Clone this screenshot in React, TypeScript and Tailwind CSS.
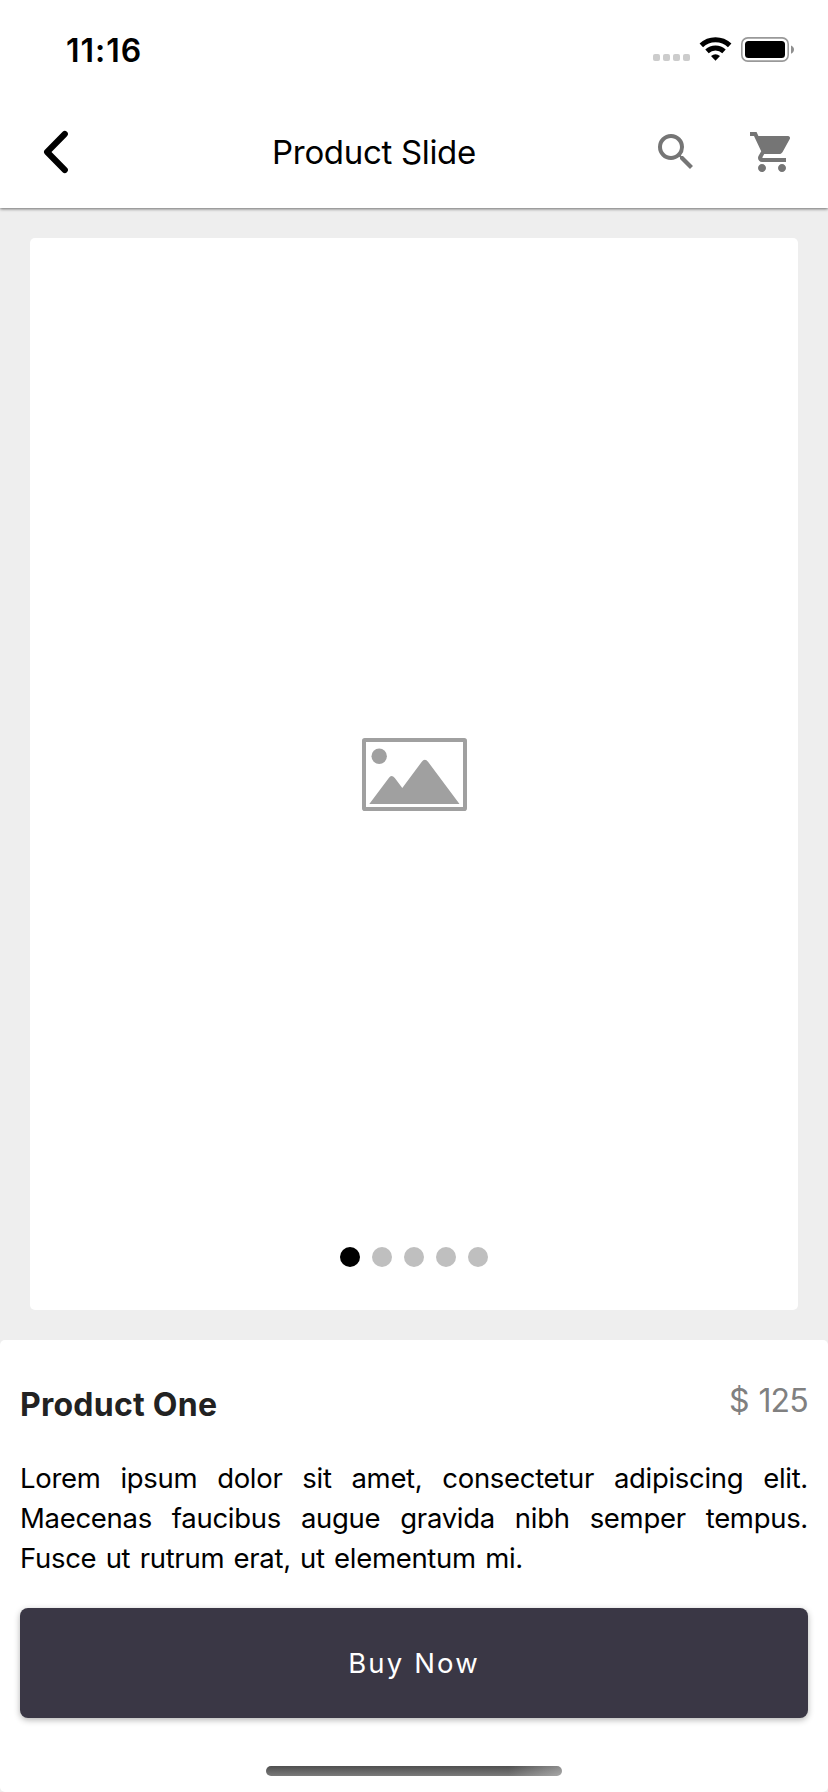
const slides = ["one", "two", "three", "four", "five"];

function StatusBar() {
  return (
    <div className="flex h-24 items-center justify-between pt-1 pr-[34px] pl-[66px]">
      <span className="pt-px text-[32px] leading-10 font-semibold tracking-[1px] text-black">11:16</span>
      <svg className="h-[26px] w-[142px]" viewBox="0 0 142 26" fill="none">
        <g fill="#cccccc">
          <rect x="1" y="17" width="7" height="7" rx="2" />
          <rect x="11" y="17" width="7" height="7" rx="2" />
          <rect x="21" y="17" width="7" height="7" rx="2" />
          <rect x="31" y="17" width="7" height="7" rx="2" />
        </g>
        <g stroke="#000" strokeWidth="5">
          <path d="M49.3 8.4A20.5 20.5 0 0 1 77.7 8.4" />
          <path d="M55 14.4A12.4 12.4 0 0 1 72 14.4" />
        </g>
        <path d="M59 19Q63.5 15.4 68 19L63.5 23.8Z" fill="#000" />
        <rect x="89.8" y="0.9" width="46.4" height="23.2" rx="6" stroke="#999" strokeWidth="1.6" />
        <rect x="93" y="4" width="40" height="17" rx="3.5" fill="#000" />
        <path d="M139 8.4Q142 9.6 142 12.5T139 16.8Z" fill="#8f8f8f" />
      </svg>
    </div>
  );
}

function Header() {
  return (
    <header className="flex h-28 items-center pr-8">
      <button className="flex w-24 justify-start pl-10" aria-label="Back">
        <svg className="h-12 w-8" viewBox="0 0 32 48" fill="none">
          <path
            d="M24.8 6L7.1 24L24.8 42"
            stroke="#000"
            strokeWidth="6.1"
            strokeLinecap="round"
            strokeLinejoin="round"
          />
        </svg>
      </button>
      <h1 className="flex-1 text-center text-[33px] leading-10 font-normal tracking-[-0.32px] text-black">
        Product Slide
      </h1>
      <div className="flex gap-12 text-[#757575]">
        <svg className="size-12" viewBox="0 0 24 24" fill="currentColor">
          <path d="M15.5 14h-.79l-.28-.27A6.471 6.471 0 0 0 16 9.5 6.5 6.5 0 1 0 9.5 16c1.61 0 3.09-.59 4.23-1.57l.27.28v.79l5 4.99L20.49 19l-4.99-5zm-6 0C7.01 14 5 11.99 5 9.5S7.01 5 9.5 5 14 7.01 14 9.5 11.99 14 9.5 14z" />
        </svg>
        <svg className="size-12" viewBox="0 0 24 24" fill="currentColor">
          <path d="M7 18c-1.1 0-1.99.9-1.99 2S5.9 22 7 22s2-.9 2-2-.9-2-2-2zM1 2v2h2l3.6 7.59-1.35 2.45c-.16.28-.25.61-.25.96 0 1.1.9 2 2 2h12v-2H7.42c-.14 0-.25-.11-.25-.25l.03-.12.9-1.63h7.45c.75 0 1.41-.41 1.75-1.03l3.58-6.49A1.003 1.003 0 0 0 20 4H5.21l-.94-2H1zm16 16c-1.1 0-1.99.9-1.99 2s.89 2 1.99 2 2-.9 2-2-.9-2-2-2z" />
        </svg>
      </div>
    </header>
  );
}

function ImagePlaceholder() {
  return (
    <svg className="h-[73px] w-[105px]" viewBox="0 0 105 73">
      <rect x="2" y="2" width="101" height="69" rx="0.8" fill="none" stroke="#a0a0a0" strokeWidth="4" />
      <circle cx="17.2" cy="18.3" r="7.7" fill="#a0a0a0" />
      <path
        d="M7.3 66L26.8 40Q29.4 36 32.8 40L40.3 50L59.6 24Q62.8 19.6 66.2 24L97.5 66Z"
        fill="#a0a0a0"
      />
    </svg>
  );
}

function SlideCard() {
  return (
    <section className="relative flex h-[1072px] items-center justify-center rounded-[5px] bg-white">
      <ImagePlaceholder />
      <div className="absolute inset-x-0 bottom-[43px] flex justify-center gap-3">
        {slides.map((slide, index) => (
          <span
            key={slide}
            className={index === 0 ? "size-5 rounded-full bg-black" : "size-5 rounded-full bg-[#bfbfbf]"}
          />
        ))}
      </div>
    </section>
  );
}

function ProductPanel() {
  return (
    <section className="flex flex-1 flex-col rounded-[5px] bg-white px-5 pt-10">
      <div className="flex items-start justify-between">
        <h2 className="pt-[5px] text-[32px] leading-10 font-bold tracking-[0.25px] text-[#222]">Product One</h2>
        <span className="pt-px text-[32px] leading-10 tracking-[-0.8px] text-[#808080] [word-spacing:1.6px]">
          $ 125
        </span>
      </div>
      <p className="mt-[33px] text-justify text-[27.5px] leading-10 tracking-[-0.3px] text-black [word-spacing:1.9px]">
        Lorem ipsum dolor sit amet, consectetur adipiscing elit. Maecenas faucibus augue gravida nibh semper
        tempus. Fusce ut rutrum erat, ut elementum mi.
      </p>
      <button className="mt-[30px] flex h-[110px] items-center justify-center rounded-lg bg-[#3a3745] text-[27.5px] leading-10 font-normal tracking-[2.15px] text-white shadow-[0_2px_6px_rgba(0,0,0,0.3)]">
        Buy Now
      </button>
      <div className="mt-12 h-2.5 w-[296px] self-center rounded-full bg-[linear-gradient(90deg,transparent_82%,rgba(255,255,255,0.35)_100%),linear-gradient(180deg,#4f4f4f,#7a7a7a)]" />
    </section>
  );
}

export default function App() {
  return (
    <main className="flex h-[1792px] w-[828px] flex-col overflow-hidden bg-[#eeeeee] font-['Inter',sans-serif]">
      <div className="relative bg-white shadow-[0_1px_3px_rgba(0,0,0,0.55)]">
        <StatusBar />
        <Header />
      </div>
      <div className="p-[30px]">
        <SlideCard />
      </div>
      <ProductPanel />
    </main>
  );
}
